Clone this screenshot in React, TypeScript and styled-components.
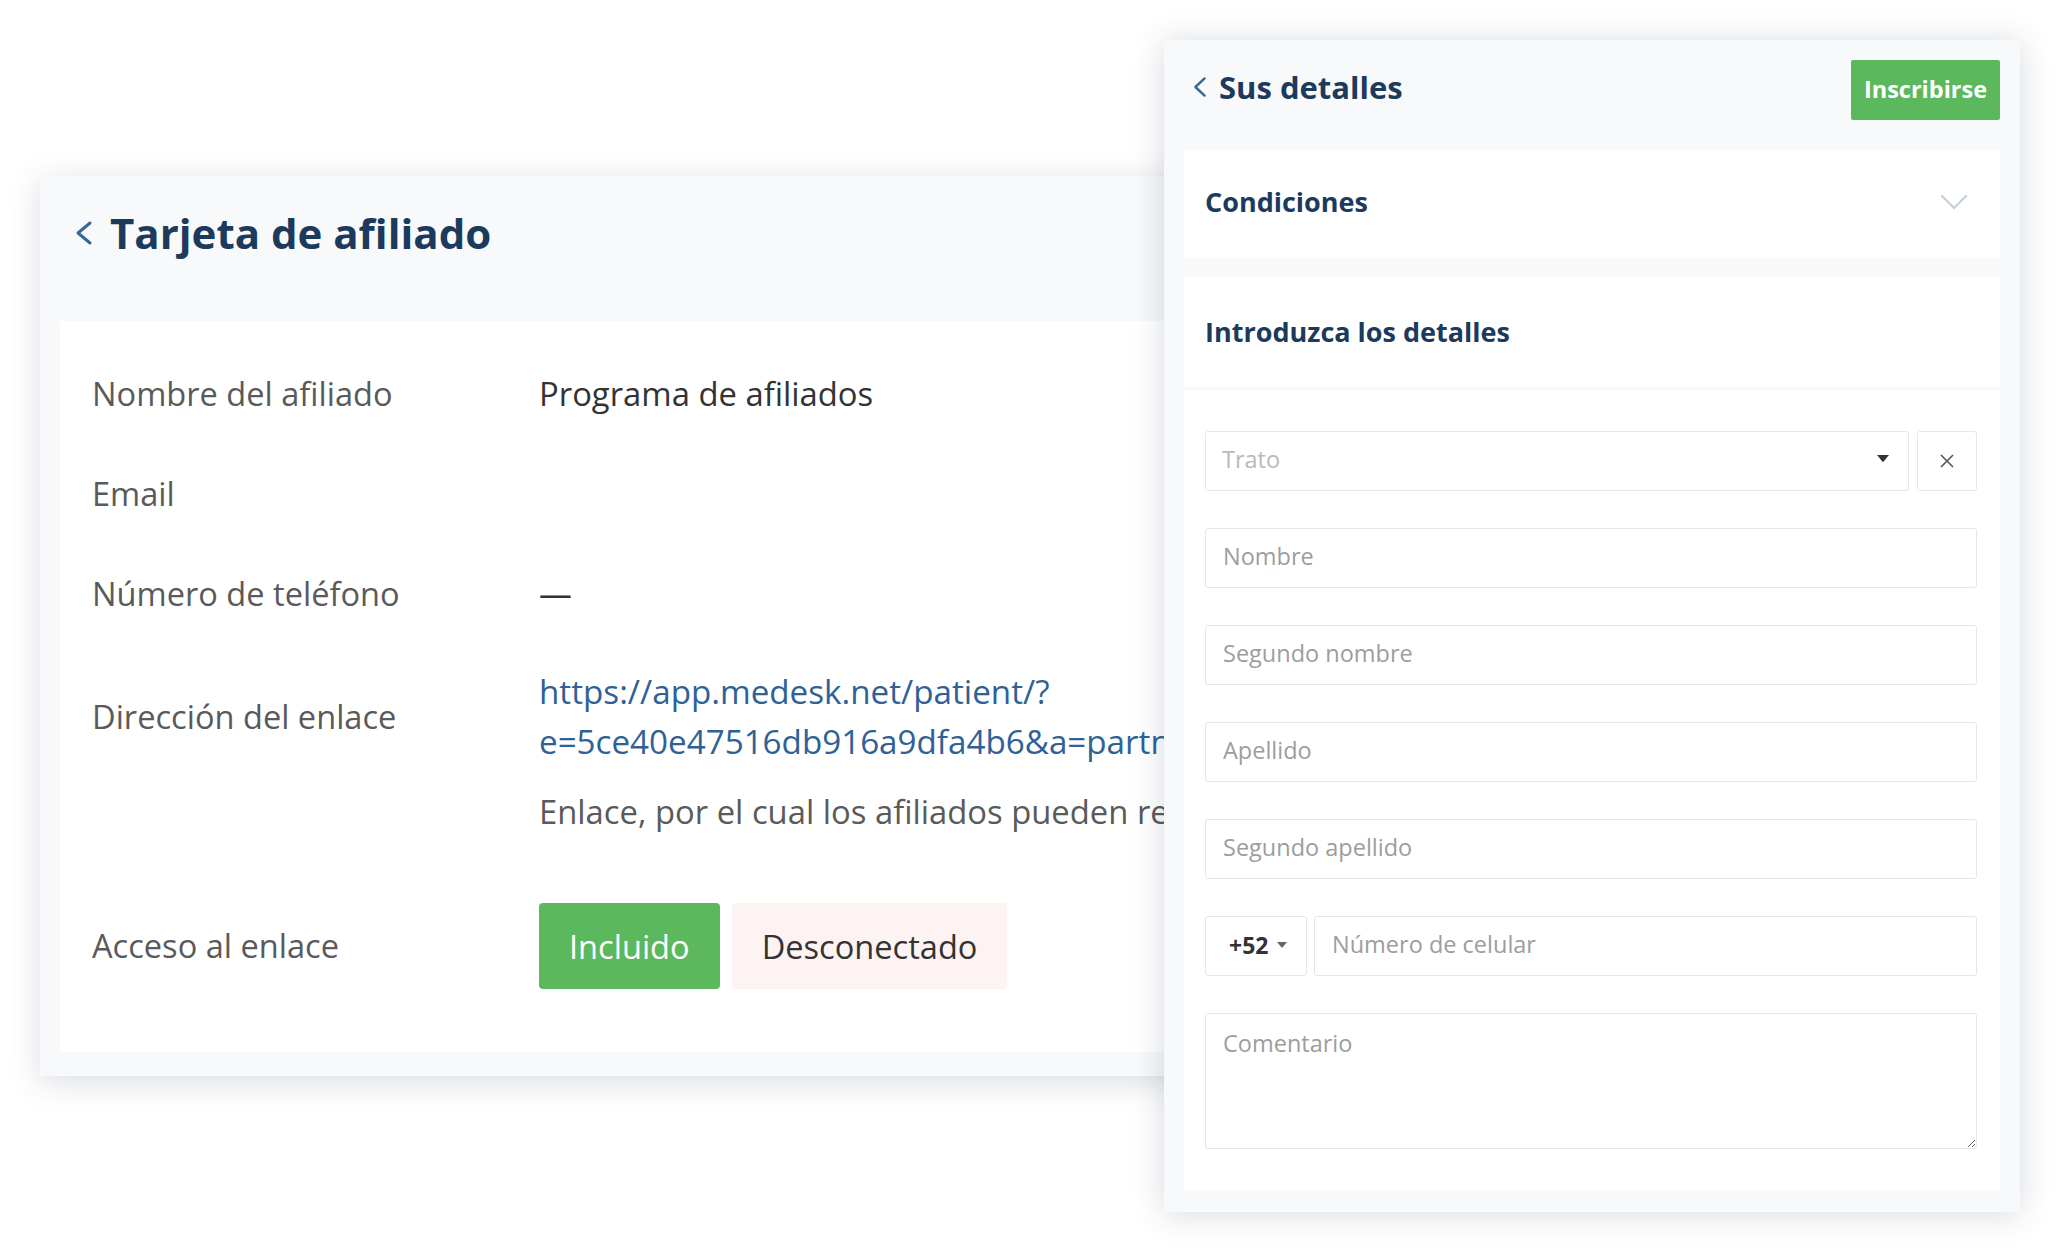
import React from "react";
import styled, { createGlobalStyle } from "styled-components";

const GlobalStyle = createGlobalStyle`
  html, body { margin: 0; padding: 0; background: #ffffff; }
  body { font-family: "Open Sans", "Noto Sans", sans-serif; }
  * { box-sizing: border-box; }
`;

const NAVY = "#1c3a5c";
const GREEN = "#5cb85c";

const Desk = styled.div`
  position: relative;
  width: 2060px;
  height: 1252px;
  overflow: hidden;
  background: #ffffff;
`;

/* ---------- Left window: Tarjeta de afiliado ---------- */

const CardWindow = styled.section`
  position: absolute;
  left: 40px;
  top: 176px;
  width: 1320px;
  height: 900px;
  background: #f7f9fb;
  box-shadow: 0 6px 30px rgba(30, 45, 70, 0.16);
  display: flex;
  flex-direction: column;
`;

const CardHeader = styled.header`
  height: 145px;
  padding: 30px 0 0 35px;
  display: flex;
  align-items: flex-start;
`;

const TitleRow = styled.div<{ $gap: number; $lift?: number }>`
  display: flex;
  align-items: center;
  gap: ${(p) => p.$gap}px;
  padding-bottom: ${(p) => p.$lift ?? 0}px;
`;

const BigTitle = styled.h1`
  margin: 0;
  font-size: 42px;
  line-height: 54px;
  font-weight: 700;
  color: ${NAVY};
  white-space: nowrap;
`;

const CardBody = styled.div`
  flex: 1;
  margin: 0 20px 24px 20px;
  background: #ffffff;
  padding: 23px 0 63px 32px;
  display: flex;
  flex-direction: column;
`;

const DetailRow = styled.div<{ $pt?: number; $pb?: number }>`
  display: grid;
  grid-template-columns: 447px 1fr;
  align-items: center;
  padding: ${(p) => p.$pt ?? 25}px 0 ${(p) => p.$pb ?? 25}px 0;
`;

const Label = styled.div`
  font-size: 32.6px;
  line-height: 50px;
  color: #5a5a5a;
  white-space: nowrap;
`;

const Value = styled.div<{ $muted?: boolean }>`
  font-size: 32.8px;
  line-height: 50px;
  color: ${(p) => (p.$muted ? "#5a5a5a" : "#333333")};
  white-space: nowrap;
`;

const LinkValue = styled.a`
  display: block;
  font-size: 33.2px;
  line-height: 50px;
  color: #2f6196;
  text-decoration: none;
  white-space: nowrap;
`;

const Toggle = styled.div`
  display: flex;
  gap: 12px;
`;

const ToggleButton = styled.button<{ $active?: boolean }>`
  height: 86px;
  padding: 0 30px;
  border: none;
  border-radius: 4px;
  font-family: "Open Sans", "Noto Sans", sans-serif;
  font-size: 32.6px;
  font-weight: 400;
  background: ${(p) => (p.$active ? GREEN : "#fdf3f2")};
  color: ${(p) => (p.$active ? "#ffffff" : "#333333")};
  cursor: pointer;
`;

/* ---------- Right window: Sus detalles ---------- */

const Panel = styled.aside`
  position: absolute;
  left: 1164px;
  top: 40px;
  width: 856px;
  height: 1172px;
  background: #f7f9fb;
  box-shadow: 0 2px 30px rgba(30, 45, 70, 0.18);
  padding: 20px 20px 22px 20px;
  display: flex;
  flex-direction: column;
`;

const PanelHeader = styled.div`
  height: 60px;
  padding-left: 9px;
  display: flex;
  align-items: center;
  justify-content: space-between;
`;

const PanelTitle = styled.h2`
  margin: 0;
  font-size: 31px;
  line-height: 42px;
  font-weight: 700;
  color: ${NAVY};
`;

const PrimaryButton = styled.button`
  height: 60px;
  width: 149px;
  border: none;
  border-radius: 2px;
  background: ${GREEN};
  color: #ffffff;
  font-family: "Open Sans", "Noto Sans", sans-serif;
  font-size: 23.5px;
  font-weight: 700;
  padding: 0 0 2px 0;
`;

const AccordionCard = styled.div`
  margin-top: 30px;
  height: 108px;
  background: #ffffff;
  padding: 0 32px 4px 21px;
  display: flex;
  align-items: center;
  justify-content: space-between;
`;

const SectionTitle = styled.h3`
  margin: 0;
  font-size: 27px;
  line-height: 36px;
  font-weight: 700;
  color: ${NAVY};
`;

const DetailsCard = styled.div`
  margin-top: 19px;
  display: flex;
  flex-direction: column;
  gap: 3px;
`;

const DetailsHead = styled.div`
  height: 110px;
  background: #ffffff;
  padding: 0 21px 0 21px;
  display: flex;
  align-items: center;
`;

const Form = styled.form`
  background: #ffffff;
  padding: 41px 23px 41px 21px;
  display: flex;
  flex-direction: column;
  gap: 37px;
`;

const InlineGroup = styled.div<{ $gap: number }>`
  display: flex;
  gap: ${(p) => p.$gap}px;
`;

const Field = styled.input`
  width: 100%;
  height: 60px;
  border: 1px solid #e2e7ed;
  border-radius: 3px;
  padding: 0 17px 5px 17px;
  font-family: "Open Sans", "Noto Sans", sans-serif;
  font-size: 23.5px;
  color: #333333;
  background: #ffffff;
  outline: none;
  &::placeholder {
    color: #9d9d9d;
  }
`;

const SelectBox = styled.div`
  flex: 1;
  height: 60px;
  border: 1px solid #e2e7ed;
  border-radius: 3px;
  padding: 0 19px 4px 16px;
  display: flex;
  align-items: center;
  justify-content: space-between;
  font-size: 23.5px;
  color: #b9b9b9;
  background: #ffffff;
`;

const ClearBox = styled.button`
  width: 60px;
  height: 60px;
  flex: none;
  border: 1px solid #e2e7ed;
  border-radius: 3px;
  background: #ffffff;
  display: flex;
  align-items: center;
  justify-content: center;
  padding: 0;
`;

const CodeBox = styled.div`
  width: 102px;
  height: 60px;
  flex: none;
  border: 1px solid #e2e7ed;
  border-radius: 3px;
  background: #ffffff;
  padding: 0 0 3px 23px;
  display: flex;
  align-items: center;
  gap: 9px;
  font-size: 23px;
  font-weight: 700;
  color: #333333;
`;

const Comment = styled.textarea`
  width: 100%;
  height: 136px;
  border: 1px solid #e2e7ed;
  border-radius: 3px;
  padding: 13px 17px;
  font-family: "Open Sans", "Noto Sans", sans-serif;
  font-size: 23.5px;
  color: #333333;
  background: #ffffff;
  outline: none;
  &::placeholder {
    color: #9d9d9d;
  }
`;

/* ---------- Icons ---------- */

const ChevronLeft = ({ w, h, sw }: { w: number; h: number; sw: number }) => (
  <svg width={w} height={h} viewBox={`0 0 ${w} ${h}`} fill="none">
    <path
      d={`M${w - sw} ${sw} L${sw} ${h / 2} L${w - sw} ${h - sw}`}
      stroke="#3b6794"
      strokeWidth={sw}
      strokeLinecap="round"
      strokeLinejoin="round"
    />
  </svg>
);

const ChevronDown = () => (
  <svg width="28" height="16" viewBox="0 0 28 16" fill="none">
    <path d="M2 2 L14 14 L26 2" stroke="#c3cfdb" strokeWidth="2.2" strokeLinecap="round" />
  </svg>
);

const Caret = ({ size, color }: { size: number; color: string }) => (
  <svg width={size} height={size * 0.6} viewBox="0 0 10 6">
    <path d="M0 0 L10 0 L5 6 Z" fill={color} />
  </svg>
);

const CloseIcon = () => (
  <svg width="14" height="14" viewBox="0 0 14 14" fill="none">
    <path d="M1 1 L13 13 M13 1 L1 13" stroke="#555555" strokeWidth="1.6" />
  </svg>
);

export default function App() {
  return (
    <>
      <GlobalStyle />
      <Desk>
        <CardWindow>
          <CardHeader>
            <TitleRow $gap={17}>
              <ChevronLeft w={18} h={26} sw={3} />
              <BigTitle>Tarjeta de afiliado</BigTitle>
            </TitleRow>
          </CardHeader>
          <CardBody>
            <DetailRow>
              <Label>Nombre del afiliado</Label>
              <Value>Programa de afiliados</Value>
            </DetailRow>
            <DetailRow>
              <Label>Email</Label>
              <Value />
            </DetailRow>
            <DetailRow>
              <Label>Número de teléfono</Label>
              <Value>—</Value>
            </DetailRow>
            <DetailRow $pt={23} $pb={0}>
              <Label>Dirección del enlace</Label>
              <LinkValue href="#">
                https://app.medesk.net/patient/?
                <br />
                e=5ce40e47516db916a9dfa4b6&amp;a=partner
              </LinkValue>
            </DetailRow>
            <DetailRow $pt={20} $pb={0}>
              <Label />
              <Value $muted>Enlace, por el cual los afiliados pueden registrarse</Value>
            </DetailRow>
            <DetailRow $pt={66} $pb={0}>
              <Label>Acceso al enlace</Label>
              <Toggle>
                <ToggleButton $active>Incluido</ToggleButton>
                <ToggleButton>Desconectado</ToggleButton>
              </Toggle>
            </DetailRow>
          </CardBody>
        </CardWindow>

        <Panel>
          <PanelHeader>
            <TitleRow $gap={12} $lift={7}>
              <ChevronLeft w={14} h={22} sw={2.4} />
              <PanelTitle>Sus detalles</PanelTitle>
            </TitleRow>
            <PrimaryButton>Inscribirse</PrimaryButton>
          </PanelHeader>

          <AccordionCard>
            <SectionTitle>Condiciones</SectionTitle>
            <ChevronDown />
          </AccordionCard>

          <DetailsCard>
            <DetailsHead>
              <SectionTitle>Introduzca los detalles</SectionTitle>
            </DetailsHead>
            <Form onSubmit={(e) => e.preventDefault()}>
              <InlineGroup $gap={8}>
                <SelectBox>
                  <span>Trato</span>
                  <Caret size={12} color="#333333" />
                </SelectBox>
                <ClearBox type="button">
                  <CloseIcon />
                </ClearBox>
              </InlineGroup>
              <Field placeholder="Nombre" />
              <Field placeholder="Segundo nombre" />
              <Field placeholder="Apellido" />
              <Field placeholder="Segundo apellido" />
              <InlineGroup $gap={7}>
                <CodeBox>
                  <span>+52</span>
                  <Caret size={10} color="#666666" />
                </CodeBox>
                <Field placeholder="Número de celular" />
              </InlineGroup>
              <Comment placeholder="Comentario" />
            </Form>
          </DetailsCard>
        </Panel>
      </Desk>
    </>
  );
}
